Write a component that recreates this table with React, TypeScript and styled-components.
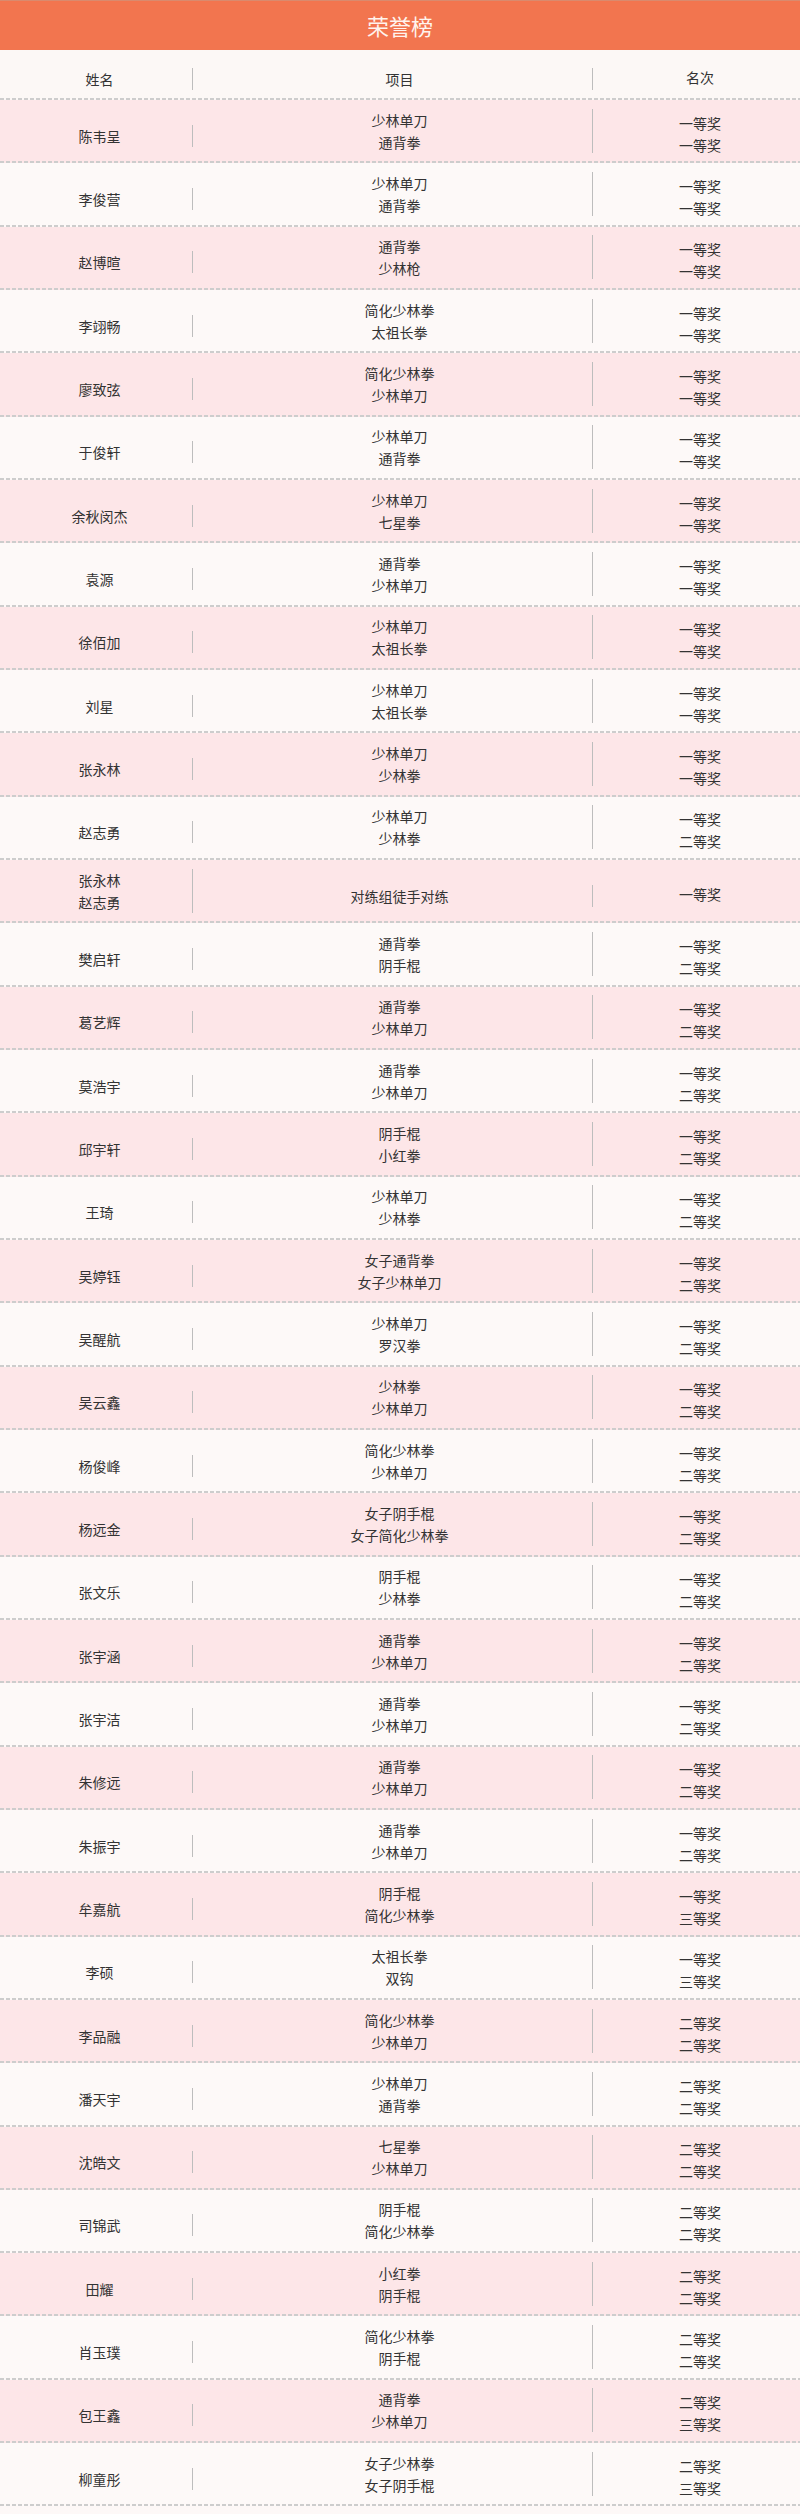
import styled, { createGlobalStyle } from 'styled-components';

interface Award {
  names: string[];
  events: string[];
  ranks: string[];
}

const GlobalStyle = createGlobalStyle`
  html, body {
    margin: 0;
    padding: 0;
    background: #fdf8f7;
  }

  body {
    font-family: "Noto Sans CJK SC", "Noto Sans", sans-serif;
    color: #333;
  }
`;

const dash =
  'repeating-linear-gradient(90deg, #cdcdcd 0 4px, transparent 4px 6px) left bottom / 100% 2px no-repeat';

const Page = styled.section`
  width: 800px;
  min-height: 2514px;
  background: #fdf8f7;
`;

const Banner = styled.h1`
  margin: 0;
  height: 49px;
  border-top: 1px solid #d98a6e;
  background: #f2754f;
  color: #fff4ee;
  font-size: 22px;
  font-weight: 400;
  line-height: 49px;
  text-align: center;
`;

const Row = styled.div<{ $tint: string; $height: number }>`
  display: grid;
  grid-template-columns: 200px 400px 200px;
  align-items: center;
  box-sizing: border-box;
  height: ${({ $height }) => $height}px;
  padding-bottom: 2px;
  background: ${dash}, ${({ $tint }) => $tint};
  font-size: 14px;
  line-height: 22px;
`;

const Cell = styled.div<{ $shift: number; $divider?: boolean }>`
  margin: ${({ $shift }) => $shift}px 7px 0 0;
  padding-left: 7px;
  border-right: ${({ $divider }) => ($divider ? '1px solid #bdbdbd' : 'none')};
  text-align: center;
  white-space: nowrap;
`;

const Line = styled.span`
  display: block;
`;

const awards: Award[] = [
  { names: ['陈韦呈'], events: ['少林单刀', '通背拳'], ranks: ['一等奖', '一等奖'] },
  { names: ['李俊营'], events: ['少林单刀', '通背拳'], ranks: ['一等奖', '一等奖'] },
  { names: ['赵博暄'], events: ['通背拳', '少林枪'], ranks: ['一等奖', '一等奖'] },
  { names: ['李翊畅'], events: ['简化少林拳', '太祖长拳'], ranks: ['一等奖', '一等奖'] },
  { names: ['廖致弦'], events: ['简化少林拳', '少林单刀'], ranks: ['一等奖', '一等奖'] },
  { names: ['于俊轩'], events: ['少林单刀', '通背拳'], ranks: ['一等奖', '一等奖'] },
  { names: ['余秋闵杰'], events: ['少林单刀', '七星拳'], ranks: ['一等奖', '一等奖'] },
  { names: ['袁源'], events: ['通背拳', '少林单刀'], ranks: ['一等奖', '一等奖'] },
  { names: ['徐佰加'], events: ['少林单刀', '太祖长拳'], ranks: ['一等奖', '一等奖'] },
  { names: ['刘星'], events: ['少林单刀', '太祖长拳'], ranks: ['一等奖', '一等奖'] },
  { names: ['张永林'], events: ['少林单刀', '少林拳'], ranks: ['一等奖', '一等奖'] },
  { names: ['赵志勇'], events: ['少林单刀', '少林拳'], ranks: ['一等奖', '二等奖'] },
  { names: ['张永林', '赵志勇'], events: ['对练组徒手对练'], ranks: ['一等奖'] },
  { names: ['樊启轩'], events: ['通背拳', '阴手棍'], ranks: ['一等奖', '二等奖'] },
  { names: ['葛艺辉'], events: ['通背拳', '少林单刀'], ranks: ['一等奖', '二等奖'] },
  { names: ['莫浩宇'], events: ['通背拳', '少林单刀'], ranks: ['一等奖', '二等奖'] },
  { names: ['邱宇轩'], events: ['阴手棍', '小红拳'], ranks: ['一等奖', '二等奖'] },
  { names: ['王琦'], events: ['少林单刀', '少林拳'], ranks: ['一等奖', '二等奖'] },
  { names: ['吴婷钰'], events: ['女子通背拳', '女子少林单刀'], ranks: ['一等奖', '二等奖'] },
  { names: ['吴醒航'], events: ['少林单刀', '罗汉拳'], ranks: ['一等奖', '二等奖'] },
  { names: ['吴云鑫'], events: ['少林拳', '少林单刀'], ranks: ['一等奖', '二等奖'] },
  { names: ['杨俊峰'], events: ['简化少林拳', '少林单刀'], ranks: ['一等奖', '二等奖'] },
  { names: ['杨远金'], events: ['女子阴手棍', '女子简化少林拳'], ranks: ['一等奖', '二等奖'] },
  { names: ['张文乐'], events: ['阴手棍', '少林拳'], ranks: ['一等奖', '二等奖'] },
  { names: ['张宇涵'], events: ['通背拳', '少林单刀'], ranks: ['一等奖', '二等奖'] },
  { names: ['张宇洁'], events: ['通背拳', '少林单刀'], ranks: ['一等奖', '二等奖'] },
  { names: ['朱修远'], events: ['通背拳', '少林单刀'], ranks: ['一等奖', '二等奖'] },
  { names: ['朱振宇'], events: ['通背拳', '少林单刀'], ranks: ['一等奖', '二等奖'] },
  { names: ['牟嘉航'], events: ['阴手棍', '简化少林拳'], ranks: ['一等奖', '三等奖'] },
  { names: ['李硕'], events: ['太祖长拳', '双钩'], ranks: ['一等奖', '三等奖'] },
  { names: ['李品融'], events: ['简化少林拳', '少林单刀'], ranks: ['二等奖', '二等奖'] },
  { names: ['潘天宇'], events: ['少林单刀', '通背拳'], ranks: ['二等奖', '二等奖'] },
  { names: ['沈皓文'], events: ['七星拳', '少林单刀'], ranks: ['二等奖', '二等奖'] },
  { names: ['司锦武'], events: ['阴手棍', '简化少林拳'], ranks: ['二等奖', '二等奖'] },
  { names: ['田耀'], events: ['小红拳', '阴手棍'], ranks: ['二等奖', '二等奖'] },
  { names: ['肖玉璞'], events: ['简化少林拳', '阴手棍'], ranks: ['二等奖', '二等奖'] },
  { names: ['包王鑫'], events: ['通背拳', '少林单刀'], ranks: ['二等奖', '三等奖'] },
  { names: ['柳童彤'], events: ['女子少林拳', '女子阴手棍'], ranks: ['二等奖', '三等奖'] },
];

// single lines sit a little below the middle of the row
const shiftFor = (lines: string[]) => (lines.length === 1 ? 10 : 0);

const renderLines = (lines: string[]) =>
  lines.map((text, i) => <Line key={i}>{text}</Line>);

const App = () => {
  return (
    <Page>
      <GlobalStyle />
      <Banner>荣誉榜</Banner>

      <Row $tint="#fcf8f6" $height={50}>
        <Cell $shift={9} $divider>姓名</Cell>
        <Cell $shift={9} $divider>项目</Cell>
        <Cell $shift={5}>名次</Cell>
      </Row>

      {awards.map((award, i) => (
        <Row key={i} $tint={i % 2 === 0 ? '#fde6e8' : '#fdf9f8'} $height={63.34}>
          <Cell $shift={shiftFor(award.names)} $divider>
            {renderLines(award.names)}
          </Cell>
          <Cell $shift={shiftFor(award.events)} $divider>
            {renderLines(award.events)}
          </Cell>
          <Cell $shift={6}>{renderLines(award.ranks)}</Cell>
        </Row>
      ))}
    </Page>
  );
};

export default App;
